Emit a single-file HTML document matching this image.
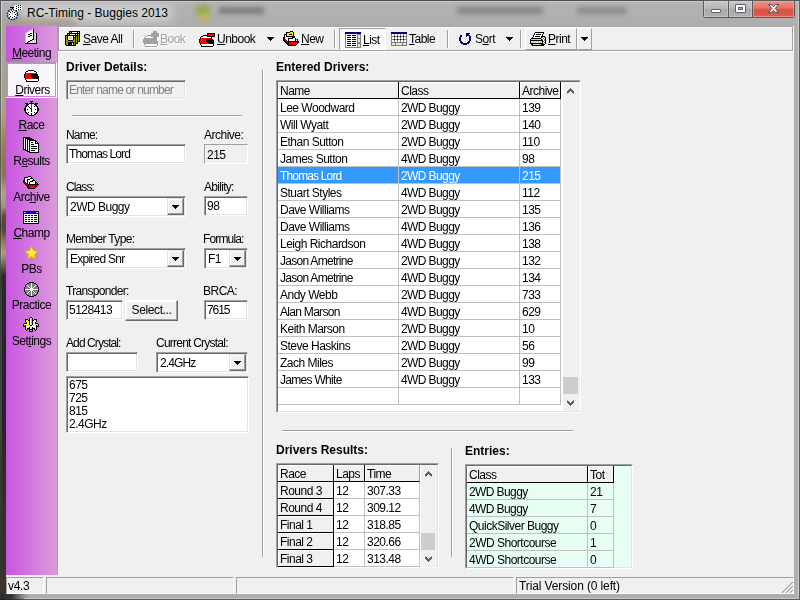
<!DOCTYPE html>
<html>
<head>
<meta charset="utf-8">
<title>RC-Timing - Buggies 2013</title>
<style>
*{box-sizing:border-box;margin:0;padding:0}
html,body{width:800px;height:600px;overflow:hidden}
body{position:relative;background:#b0b0b0;font-family:"Liberation Sans",sans-serif;font-size:12px;letter-spacing:-0.5px;color:#000;line-height:14px}
.a{position:absolute}
/* frame */
#frame{left:0;top:0;width:800px;height:600px;background:#b0b0b0}
#client{left:6px;top:26px;width:788px;height:568px;background:#f0f0f0}
/* sidebar */
u{text-decoration:underline;text-decoration-thickness:1px;text-underline-offset:1px}
/* 3D borders */
.inp{position:absolute;height:20px;background:#fff;border:1px solid;border-color:#a0a0a0 #fff #fff #a0a0a0;box-shadow:inset 1px 1px 0 #696969, inset -1px -1px 0 #e3e3e3;padding:2px 0 0 2px;white-space:nowrap;overflow:hidden}
.inp.dis{background:#f0f0f0}
.inp.cb{height:21px;padding:3px 0 0 3px}
.inp.st{box-shadow:none;padding:3px 0 0 2px}
.lbl{position:absolute;white-space:nowrap;height:14px}
.b{font-weight:bold;letter-spacing:0}
.ddb{position:absolute;right:1px;top:1px;width:17px;height:17px;background:#f0f0f0;border:1px solid;border-color:#e3e3e3 #696969 #696969 #e3e3e3;box-shadow:inset -1px -1px 0 #a0a0a0, inset 1px 1px 0 #fff}
.ddb:after{content:"";position:absolute;left:4px;top:6px;width:7px;height:4px;background:linear-gradient(#000,#000) 0 0/7px 1px no-repeat,linear-gradient(#000,#000) 1px 1px/5px 1px no-repeat,linear-gradient(#000,#000) 2px 2px/3px 1px no-repeat,linear-gradient(#000,#000) 3px 3px/1px 1px no-repeat}
.hsep{position:absolute;height:2px;border-top:1px solid #a0a0a0;border-bottom:1px solid #fff}
.vsep{position:absolute;width:2px;border-left:1px solid #a0a0a0;border-right:1px solid #fff}
/* grids */
.grid{position:absolute;border:1px solid;border-color:#a0a0a0 #fff #fff #a0a0a0;background:#fff;overflow:hidden}
.grid .in{position:absolute;left:0;top:0;right:0;bottom:0;border:1px solid;border-color:#696969 #e3e3e3 #e3e3e3 #696969}
.cell{position:absolute;height:17px;padding:2px 0 0 2px;white-space:nowrap;overflow:hidden;border-right:1px solid #c0c0c0;border-bottom:1px solid #c0c0c0;background:#fff}
.hd{background:#f0f0f0;border-right:1px solid #000;border-bottom:1px solid #000;box-shadow:inset 1px 1px 0 #fff}
.sel{background:#3399ff;color:#fff}
/* toolbar */
.tb{position:absolute;white-space:nowrap;height:14px}
.tsep{position:absolute;top:4px;width:2px;height:18px;border-left:1px solid #a0a0a0;border-right:1px solid #fff}
.dar{position:absolute;width:7px;height:4px;background:linear-gradient(#000,#000) 0 0/7px 1px no-repeat,linear-gradient(#000,#000) 1px 1px/5px 1px no-repeat,linear-gradient(#000,#000) 2px 2px/3px 1px no-repeat,linear-gradient(#000,#000) 3px 3px/1px 1px no-repeat}
/* status */
.sp{position:absolute;top:551px;height:17px;border:1px solid;border-color:#a0a0a0 #fff #fff #a0a0a0;padding:1px 0 0 2px;white-space:nowrap;letter-spacing:0}
</style>
</head>
<body>
<div id="frame" class="a">
 <!-- glass title bar -->
 <div class="a" style="left:0;top:0;width:800px;height:26px;background:linear-gradient(180deg,#b4b4b4 0%,#b0b0b0 60%,#adadad 100%)"></div>
 <!-- blurred things behind the glass -->
 <div class="a" style="left:22px;top:4px;width:150px;height:18px;background:#d2d2d2;filter:blur(5px);opacity:.9"></div>
 <div class="a" style="left:196px;top:5px;width:14px;height:12px;background:#8faa3a;filter:blur(3px);border-radius:6px"></div>
 <div class="a" style="left:200px;top:14px;width:10px;height:8px;background:#c9b860;filter:blur(3px);border-radius:5px"></div>
 <div class="a" style="left:219px;top:7px;width:45px;height:7px;background:#7c7c7c;filter:blur(2.5px)"></div>
 <div class="a" style="left:457px;top:7px;width:86px;height:7px;background:#858585;filter:blur(2.5px)"></div>
 <div class="a" style="left:577px;top:7px;width:50px;height:7px;background:#8c8c8c;filter:blur(2.5px)"></div>
 <div class="a" style="left:4px;top:19px;width:72px;height:9px;background:#9a8e74;filter:blur(4px);opacity:.75"></div>
 <!-- left strip -->
 <div class="a" style="left:0;top:20px;width:6px;height:580px;background:linear-gradient(180deg,#a8a89c 0px,#a4a290 80px,#a6a084 92px,#a89c68 102px,#98805a 122px,#8a7650 142px,#857860 157px,#a8a490 172px,#a09878 186px,#5c4c3a 196px,#54463a 211px,#8c7858 221px,#a8a080 233px,#6a6454 245px,#2a2a2c 256px,#242428 400px,#2e2a26 440px,#38302a 520px,#3a322c 580px)"></div>
 <div class="a" style="left:1px;top:270px;width:1px;height:325px;background:linear-gradient(180deg,rgba(70,70,72,0) 0,#444446 25px,#444446 150px,#3c3834 200px,#3a3430 100%)"></div>
 <!-- bottom strip -->
 <div class="a" style="left:0;top:594px;width:800px;height:6px;background:linear-gradient(90deg,#2c2927 0px,#3a3632 12px,#8a8885 22px,#adadad 30px,#aeaeae 100%)"></div>
 <!-- right strip -->
 <div class="a" style="left:794px;top:20px;width:6px;height:580px;background:#b0b0b0"></div>
 <!-- outer edges -->
 <div class="a" style="left:0;top:0;width:800px;height:1px;background:#4e4e4e"></div>
 <div class="a" style="left:1px;top:1px;width:798px;height:1px;background:#cfcfcf;opacity:.8"></div>
 <div class="a" style="left:0;top:0;width:1px;height:600px;background:linear-gradient(180deg,#5a5a5a 0,#6e6c62 110px,#5e5444 160px,#6a6658 200px,#3c342c 225px,#6a6450 255px,#3a3a3c 280px,#464648 420px,#3a3632 470px,#38322e 100%)"></div>
 <div class="a" style="left:1px;top:1px;width:1px;height:265px;background:linear-gradient(180deg,#d8d8d8 0,#c4c4b8 30px,#bcbcac 100px,#b8a878 125px,#a08a60 165px,#bcb8a4 195px,#6a5a48 225px,#b4ac8c 250px,rgba(60,60,56,0) 265px)"></div>
 <div class="a" style="left:799px;top:0;width:1px;height:600px;background:#5c5c5c"></div>
 <div class="a" style="left:798px;top:1px;width:1px;height:598px;background:#cdcdcd"></div>
 <div class="a" style="left:0;top:599px;width:800px;height:1px;background:linear-gradient(90deg,#1c1c1c 0,#333 15px,#5c5c5c 30px,#5c5c5c 100%)"></div>
 <div class="a" style="left:24px;top:598px;width:775px;height:1px;background:#c6c6c6"></div>
 <!-- inner edge around client -->
 <!-- title icon (stopwatch) -->
 <svg class="a" style="left:6px;top:4px" width="18" height="17" viewBox="0 0 18 17" shape-rendering="crispEdges">
  <rect x="4" y="2.5" width="5" height="1" fill="#000"/>
  <rect x="6" y="3" width="1" height="2" fill="#000"/>
  <circle cx="6.5" cy="10.5" r="5" fill="#fff" stroke="#00008b" stroke-width="1.6" stroke-dasharray="1.6 1" shape-rendering="auto"/>
  <g fill="#000"><rect x="6" y="7" width="1" height="1"/><rect x="6" y="13" width="1" height="1"/><rect x="3" y="10" width="1" height="1"/><rect x="9" y="10" width="1" height="1"/><rect x="4" y="8" width="1" height="1"/><rect x="8" y="8" width="1" height="1"/><rect x="4" y="12" width="1" height="1"/><rect x="8" y="12" width="1" height="1"/></g>
  <rect x="6" y="8" width="1" height="3" fill="#c8c8c8"/>
  <g fill="#fff"><rect x="9" y="1" width="7" height="5"/><rect x="8" y="2" width="2" height="4"/><rect x="10" y="6" width="2" height="1"/></g>
  <g fill="#000"><rect x="10" y="2" width="1" height="1"/><rect x="12" y="1" width="1" height="1"/><rect x="14" y="1" width="1" height="1"/><rect x="12" y="3" width="1" height="1"/><rect x="14" y="3" width="1" height="1"/><rect x="10" y="4" width="1" height="1"/><rect x="12" y="5" width="1" height="1"/><rect x="14" y="5" width="1" height="1"/><rect x="10" y="6" width="1" height="1"/></g>
 </svg>
 <div class="a" style="left:27px;top:5px;height:16px;font-size:12px;letter-spacing:0;white-space:nowrap;line-height:16px" id="ttl">RC-Timing - Buggies 2013</div>
 <!-- caption buttons -->
 <div class="a" style="left:703px;top:0;width:92px;height:18px;background:#5a5a5a;border-radius:0 0 3px 3px"></div>
 <div class="a" style="left:704px;top:1px;width:24px;height:16px;background:linear-gradient(180deg,#c6c6c6 0,#b9b9b9 45%,#a9a9a9 50%,#b0b0b0 100%);box-shadow:inset 0 0 0 1px rgba(255,255,255,.25)"></div>
 <div class="a" style="left:729px;top:1px;width:23px;height:16px;background:linear-gradient(180deg,#c6c6c6 0,#b9b9b9 45%,#a9a9a9 50%,#b0b0b0 100%);box-shadow:inset 0 0 0 1px rgba(255,255,255,.25)"></div>
 <div class="a" style="left:753px;top:1px;width:41px;height:16px;background:linear-gradient(180deg,#ee9186 0,#e57266 45%,#dc4e40 55%,#de5f51 100%);box-shadow:inset 0 0 0 1px rgba(255,190,180,.45)"></div>
 <div class="a" style="left:711px;top:9px;width:10px;height:4px;background:#fff;border:1px solid #5b6070;border-radius:1px"></div>
 <div class="a" style="left:735px;top:4px;width:11px;height:9px;background:#fff;border:1px solid #5b6070;border-radius:1px"></div>
 <div class="a" style="left:738px;top:7px;width:5px;height:3px;background:#a8a8a8;border:1px solid #5b6070"></div>
 <svg class="a" style="left:767px;top:3px" width="13" height="11" viewBox="0 0 13 11"><path d="M1.5 1.5 L4.3 1.5 L6.5 3.8 L8.7 1.5 L11.5 1.5 L8.2 5.5 L11.5 9.5 L8.7 9.5 L6.5 7.2 L4.3 9.5 L1.5 9.5 L4.8 5.5 Z" fill="#fff" stroke="#4a4f64" stroke-width="1" stroke-linejoin="round"/></svg>
</div>
<div id="client" class="a"></div>
<div id="ui" class="a" style="left:0;top:0;width:800px;height:600px;will-change:transform">
<div class="a" style="left:6px;top:26px;width:51px;height:549px;background:linear-gradient(90deg,#c856df 0%,#dc9bdc 100%)"></div>
<div class="a" style="left:57px;top:26px;width:1px;height:549px;background:#a0a0a0"></div>
<div class="a" style="left:58px;top:52px;width:1px;height:523px;background:#fff"></div>
<div class="a" style="left:6px;top:62px;width:51px;height:36px;border:1px solid;border-color:#a0a0a0 #fff #fff #a0a0a0;background:#fbf6fb"><div class="a" style="left:0;top:0;width:49px;height:34px;border:1px solid #d77fe3"></div></div>
<div class="a" style="left:25px;top:29px;line-height:0"><svg width="12" height="15" viewBox="0 0 12 15" shape-rendering="crispEdges"><path fill="#fff" d="M7 0h1v1h-1zM6 1h2v1h-2zM4 2h4v1h-4zM2 3h6v1h-6zM1 4h4v1h-4zM7 4h1v1h-1zM1 5h2v1h-2zM5 5h3v1h-3zM10 5h1v1h-1zM1 6h4v1h-4zM7 6h1v1h-1zM1 7h2v1h-2zM5 7h3v1h-3zM10 7h1v1h-1zM1 8h7v1h-7zM1 9h7v1h-7zM10 9h1v1h-1zM1 10h6v1h-6zM1 11h4v1h-4zM8 11h1v1h-1zM10 11h1v1h-1zM1 12h2v1h-2zM6 12h1v1h-1zM8 12h1v1h-1zM10 12h1v1h-1zM1 13h1v1h-1zM4 13h1v1h-1zM6 13h1v1h-1zM8 13h1v1h-1zM10 13h1v1h-1z"/><path fill="#000" d="M8 0h1v1h-1zM8 1h1v1h-1zM8 2h1v1h-1zM8 3h1v1h-1zM5 4h2v1h-2zM8 4h1v1h-1zM11 4h1v1h-1zM3 5h2v1h-2zM8 5h1v1h-1zM11 5h1v1h-1zM5 6h2v1h-2zM8 6h1v1h-1zM11 6h1v1h-1zM3 7h2v1h-2zM8 7h1v1h-1zM11 7h1v1h-1zM8 8h1v1h-1zM11 8h1v1h-1zM8 9h1v1h-1zM11 9h1v1h-1zM7 10h2v1h-2zM11 10h1v1h-1zM5 11h2v1h-2zM11 11h1v1h-1zM3 12h2v1h-2zM11 12h1v1h-1zM2 13h1v1h-1zM11 13h1v1h-1zM0 14h12v1h-12z"/><path fill="#c0c0c0" d="M5 1h1v1h-1zM3 2h1v1h-1zM1 3h1v1h-1zM0 4h1v1h-1zM9 4h2v1h-2zM0 5h1v1h-1zM9 5h1v1h-1zM0 6h1v1h-1zM9 6h2v1h-2zM0 7h1v1h-1zM9 7h1v1h-1zM0 8h1v1h-1zM9 8h2v1h-2zM0 9h1v1h-1zM9 9h1v1h-1zM0 10h1v1h-1zM9 10h2v1h-2zM0 11h1v1h-1zM7 11h1v1h-1zM9 11h1v1h-1zM0 12h1v1h-1zM5 12h1v1h-1zM7 12h1v1h-1zM9 12h1v1h-1zM0 13h1v1h-1zM3 13h1v1h-1zM5 13h1v1h-1zM7 13h1v1h-1zM9 13h1v1h-1z"/></svg></div>
<div class="lbl" style="left:6px;width:51px;text-align:center;top:46px"><u>M</u>eeting</div>
<div class="a" style="left:24px;top:70px;line-height:0"><svg width="15" height="12" viewBox="0 0 15 12" shape-rendering="crispEdges"><path fill="#000" d="M4 0h6v1h-6zM2 1h2v1h-2zM10 1h2v1h-2zM1 2h1v1h-1zM12 2h1v1h-1zM1 3h1v1h-1zM12 3h1v1h-1zM0 4h1v1h-1zM7 4h7v1h-7zM0 5h1v1h-1zM7 5h7v1h-7zM0 6h1v1h-1zM7 6h8v1h-8zM0 7h1v1h-1zM8 7h7v1h-7zM1 8h1v1h-1zM10 8h5v1h-5zM1 9h1v1h-1zM14 9h1v1h-1zM2 10h1v1h-1zM14 10h1v1h-1zM2 11h12v1h-12z"/><path fill="#fff" d="M4 1h6v1h-6zM2 2h10v1h-10zM2 9h12v1h-12zM3 10h11v1h-11z"/><path fill="#f00" d="M2 3h10v1h-10zM1 4h6v1h-6zM1 5h6v1h-6zM1 6h6v1h-6zM1 7h7v1h-7zM2 8h8v1h-8z"/></svg></div>
<div class="lbl" style="left:7px;width:51px;text-align:center;top:83px"><u>D</u>rivers</div>
<div class="a" style="left:24px;top:101px;line-height:0"><svg width="15" height="15" viewBox="0 0 15 15" shape-rendering="crispEdges"><path fill="#000" d="M6 0h3v1h-3zM7 1h1v1h-1zM1 2h3v1h-3zM5 2h5v1h-5zM11 2h3v1h-3zM2 3h3v1h-3zM10 3h3v1h-3zM2 4h2v1h-2zM11 4h2v1h-2zM1 5h2v1h-2zM4 5h1v1h-1zM10 5h1v1h-1zM12 5h2v1h-2zM1 6h1v1h-1zM5 6h1v1h-1zM13 6h1v1h-1zM0 7h2v1h-2zM6 7h1v1h-1zM13 7h2v1h-2zM0 8h2v1h-2zM3 8h1v1h-1zM7 8h1v1h-1zM11 8h1v1h-1zM13 8h2v1h-2zM0 9h2v1h-2zM7 9h1v1h-1zM13 9h2v1h-2zM1 10h1v1h-1zM7 10h1v1h-1zM13 10h1v1h-1zM1 11h2v1h-2zM4 11h1v1h-1zM10 11h1v1h-1zM12 11h2v1h-2zM2 12h2v1h-2zM7 12h1v1h-1zM11 12h2v1h-2zM3 13h2v1h-2zM7 13h1v1h-1zM10 13h2v1h-2zM5 14h5v1h-5z"/><path fill="#fff" d="M5 3h2v1h-2zM8 3h2v1h-2zM4 4h3v1h-3zM8 4h3v1h-3zM3 5h1v1h-1zM5 5h2v1h-2zM8 5h2v1h-2zM11 5h1v1h-1zM2 6h3v1h-3zM6 6h1v1h-1zM8 6h5v1h-5zM2 7h4v1h-4zM8 7h5v1h-5zM2 8h1v1h-1zM4 8h3v1h-3zM8 8h3v1h-3zM12 8h1v1h-1zM2 9h5v1h-5zM8 9h5v1h-5zM2 10h5v1h-5zM8 10h5v1h-5zM3 11h1v1h-1zM5 11h5v1h-5zM11 11h1v1h-1zM4 12h3v1h-3zM8 12h3v1h-3zM5 13h2v1h-2zM8 13h2v1h-2z"/><path fill="#f00" d="M7 3h1v1h-1zM7 4h1v1h-1zM7 5h1v1h-1zM7 6h1v1h-1zM7 7h1v1h-1z"/></svg></div>
<div class="lbl" style="left:6px;width:51px;text-align:center;top:118px"><u>R</u>ace</div>
<div class="a" style="left:23px;top:137px;line-height:0"><svg width="16" height="16" viewBox="0 0 16 16" shape-rendering="crispEdges"><path fill="#000" d="M0 0h7v1h-7zM0 1h1v1h-1zM2 1h7v1h-7zM0 2h1v1h-1zM2 2h1v1h-1zM4 2h7v1h-7zM0 3h1v1h-1zM2 3h1v1h-1zM4 3h1v1h-1zM6 3h7v1h-7zM0 4h1v1h-1zM2 4h1v1h-1zM4 4h1v1h-1zM6 4h1v1h-1zM12 4h2v1h-2zM0 5h1v1h-1zM2 5h1v1h-1zM4 5h1v1h-1zM6 5h1v1h-1zM8 5h2v1h-2zM12 5h1v1h-1zM14 5h1v1h-1zM0 6h1v1h-1zM2 6h1v1h-1zM4 6h1v1h-1zM6 6h1v1h-1zM12 6h4v1h-4zM0 7h1v1h-1zM2 7h1v1h-1zM4 7h1v1h-1zM6 7h1v1h-1zM8 7h3v1h-3zM15 7h1v1h-1zM0 8h1v1h-1zM2 8h1v1h-1zM4 8h1v1h-1zM6 8h1v1h-1zM15 8h1v1h-1zM0 9h1v1h-1zM2 9h1v1h-1zM4 9h1v1h-1zM6 9h1v1h-1zM8 9h6v1h-6zM15 9h1v1h-1zM0 10h1v1h-1zM2 10h1v1h-1zM4 10h1v1h-1zM6 10h1v1h-1zM15 10h1v1h-1zM0 11h1v1h-1zM2 11h1v1h-1zM4 11h1v1h-1zM6 11h1v1h-1zM8 11h6v1h-6zM15 11h1v1h-1zM0 12h3v1h-3zM4 12h1v1h-1zM6 12h1v1h-1zM15 12h1v1h-1zM2 13h3v1h-3zM6 13h1v1h-1zM8 13h4v1h-4zM15 13h1v1h-1zM4 14h3v1h-3zM15 14h1v1h-1zM6 15h10v1h-10z"/><path fill="#fff" d="M1 1h1v1h-1zM1 2h1v1h-1zM3 2h1v1h-1zM1 3h1v1h-1zM3 3h1v1h-1zM5 3h1v1h-1zM1 4h1v1h-1zM3 4h1v1h-1zM5 4h1v1h-1zM7 4h5v1h-5zM1 5h1v1h-1zM3 5h1v1h-1zM5 5h1v1h-1zM7 5h1v1h-1zM10 5h2v1h-2zM13 5h1v1h-1zM1 6h1v1h-1zM3 6h1v1h-1zM5 6h1v1h-1zM7 6h5v1h-5zM1 7h1v1h-1zM3 7h1v1h-1zM5 7h1v1h-1zM7 7h1v1h-1zM11 7h4v1h-4zM1 8h1v1h-1zM3 8h1v1h-1zM5 8h1v1h-1zM7 8h8v1h-8zM1 9h1v1h-1zM3 9h1v1h-1zM5 9h1v1h-1zM7 9h1v1h-1zM14 9h1v1h-1zM1 10h1v1h-1zM3 10h1v1h-1zM5 10h1v1h-1zM7 10h8v1h-8zM1 11h1v1h-1zM3 11h1v1h-1zM5 11h1v1h-1zM7 11h1v1h-1zM14 11h1v1h-1zM3 12h1v1h-1zM5 12h1v1h-1zM7 12h8v1h-8zM5 13h1v1h-1zM7 13h1v1h-1zM12 13h3v1h-3zM7 14h8v1h-8z"/></svg></div>
<div class="lbl" style="left:6px;width:51px;text-align:center;top:154px">R<u>e</u>sults</div>
<div class="a" style="left:23px;top:176px;line-height:0"><svg width="16" height="13" viewBox="0 0 16 13" shape-rendering="crispEdges"><path fill="#000" d="M5 0h3v1h-3zM1 1h4v1h-4zM8 1h1v1h-1zM1 2h1v1h-1zM7 2h3v1h-3zM1 3h1v1h-1zM4 3h3v1h-3zM10 3h1v1h-1zM0 4h2v1h-2zM4 4h1v1h-1zM9 4h3v1h-3zM0 5h2v1h-2zM4 5h1v1h-1zM7 5h3v1h-3zM12 5h1v1h-1zM0 6h1v1h-1zM4 6h1v1h-1zM6 6h1v1h-1zM12 6h2v1h-2zM1 7h1v1h-1zM4 7h1v1h-1zM6 7h1v1h-1zM12 7h1v1h-1zM14 7h1v1h-1zM2 8h1v1h-1zM5 8h11v1h-11zM3 9h1v1h-1zM5 9h1v1h-1zM14 9h1v1h-1zM4 10h2v1h-2zM13 10h1v1h-1zM4 11h2v1h-2zM12 11h1v1h-1zM5 12h7v1h-7z"/><path fill="#fff" d="M5 1h3v1h-3zM2 2h5v1h-5zM2 3h2v1h-2zM7 3h3v1h-3zM2 4h2v1h-2zM5 4h4v1h-4zM2 5h2v1h-2zM5 5h2v1h-2zM10 5h2v1h-2zM3 6h1v1h-1zM5 6h1v1h-1zM7 6h5v1h-5zM5 7h1v1h-1zM7 7h5v1h-5z"/><path fill="#b00000" d="M1 6h2v1h-2zM2 7h2v1h-2zM3 8h2v1h-2zM4 9h1v1h-1zM6 9h8v1h-8z"/><path fill="#808080" d="M13 7h1v1h-1z"/><path fill="#f00" d="M6 10h7v1h-7zM6 11h6v1h-6z"/></svg></div>
<div class="lbl" style="left:6px;width:51px;text-align:center;top:190px">Arc<u>h</u>ive</div>
<div class="a" style="left:23px;top:211px;line-height:0"><svg width="16" height="13" viewBox="0 0 16 13" shape-rendering="crispEdges"><path fill="#000" d="M0 0h16v1h-16zM0 1h1v1h-1zM15 1h1v1h-1zM0 2h1v1h-1zM15 2h1v1h-1zM0 3h1v1h-1zM15 3h1v1h-1zM0 4h1v1h-1zM2 4h2v1h-2zM5 4h2v1h-2zM8 4h2v1h-2zM11 4h3v1h-3zM15 4h1v1h-1zM0 5h1v1h-1zM15 5h1v1h-1zM0 6h1v1h-1zM2 6h2v1h-2zM5 6h2v1h-2zM8 6h2v1h-2zM11 6h3v1h-3zM15 6h1v1h-1zM0 7h1v1h-1zM15 7h1v1h-1zM0 8h1v1h-1zM2 8h2v1h-2zM5 8h2v1h-2zM8 8h2v1h-2zM11 8h3v1h-3zM15 8h1v1h-1zM0 9h1v1h-1zM15 9h1v1h-1zM0 10h1v1h-1zM2 10h2v1h-2zM5 10h2v1h-2zM8 10h2v1h-2zM11 10h3v1h-3zM15 10h1v1h-1zM0 11h1v1h-1zM15 11h1v1h-1zM0 12h16v1h-16z"/><path fill="#c0c0c0" d="M1 1h2v1h-2zM13 1h2v1h-2z"/><path fill="#0000f0" d="M3 1h10v1h-10zM1 2h14v1h-14z"/><path fill="#fff" d="M1 3h14v1h-14zM1 4h1v1h-1zM4 4h1v1h-1zM7 4h1v1h-1zM10 4h1v1h-1zM14 4h1v1h-1zM1 5h14v1h-14zM1 6h1v1h-1zM4 6h1v1h-1zM7 6h1v1h-1zM10 6h1v1h-1zM14 6h1v1h-1zM1 7h14v1h-14zM1 8h1v1h-1zM4 8h1v1h-1zM7 8h1v1h-1zM10 8h1v1h-1zM14 8h1v1h-1zM1 9h14v1h-14zM1 10h1v1h-1zM4 10h1v1h-1zM7 10h1v1h-1zM10 10h1v1h-1zM14 10h1v1h-1zM1 11h14v1h-14z"/></svg></div>
<div class="lbl" style="left:6px;width:51px;text-align:center;top:226px"><u>C</u>hamp</div>
<div class="a" style="left:23px;top:245px;width:16px;height:16px;line-height:0"><svg width="17" height="16" viewBox="0 0 17 16"><defs><linearGradient id="sg" x1="0" y1="0" x2="0" y2="1"><stop offset="0" stop-color="#fffa9a"/><stop offset=".45" stop-color="#fff22e"/><stop offset="1" stop-color="#f0d414"/></linearGradient></defs><path d="M8.50 1.10 L10.44 5.73 L15.44 6.14 L11.64 9.42 L12.79 14.31 L8.50 11.70 L4.21 14.31 L5.36 9.42 L1.56 6.14 L6.56 5.73Z" fill="url(#sg)" stroke="#d0a626" stroke-width=".9" stroke-linejoin="round"/></svg></div>
<div class="lbl" style="left:6px;width:51px;text-align:center;top:262px">PBs</div>
<div class="a" style="left:24px;top:282px;line-height:0"><svg width="15" height="15" viewBox="0 0 15 15" shape-rendering="crispEdges"><path fill="#000" d="M5 0h5v1h-5zM3 1h2v1h-2zM10 1h2v1h-2zM2 2h1v1h-1zM12 2h1v1h-1zM1 3h1v1h-1zM13 3h1v1h-1zM1 4h1v1h-1zM13 4h1v1h-1zM0 5h1v1h-1zM14 5h1v1h-1zM0 6h1v1h-1zM14 6h1v1h-1zM0 7h1v1h-1zM14 7h1v1h-1zM0 8h1v1h-1zM14 8h1v1h-1zM0 9h1v1h-1zM14 9h1v1h-1zM1 10h1v1h-1zM13 10h1v1h-1zM1 11h1v1h-1zM13 11h1v1h-1zM2 12h1v1h-1zM12 12h1v1h-1zM3 13h2v1h-2zM10 13h2v1h-2zM5 14h5v1h-5z"/><path fill="#808080" d="M5 1h2v1h-2zM8 1h2v1h-2zM3 2h4v1h-4zM8 2h4v1h-4zM2 3h1v1h-1zM4 3h3v1h-3zM8 3h3v1h-3zM12 3h1v1h-1zM2 4h2v1h-2zM5 4h2v1h-2zM8 4h2v1h-2zM11 4h2v1h-2zM1 5h4v1h-4zM6 5h1v1h-1zM8 5h1v1h-1zM10 5h4v1h-4zM1 6h5v1h-5zM9 6h5v1h-5zM1 8h5v1h-5zM9 8h5v1h-5zM1 9h4v1h-4zM6 9h1v1h-1zM8 9h1v1h-1zM10 9h4v1h-4zM2 10h2v1h-2zM5 10h2v1h-2zM8 10h2v1h-2zM11 10h2v1h-2zM2 11h1v1h-1zM4 11h3v1h-3zM8 11h3v1h-3zM12 11h1v1h-1zM3 12h4v1h-4zM8 12h4v1h-4zM5 13h2v1h-2zM8 13h2v1h-2z"/><path fill="#fff" d="M7 1h1v1h-1zM7 2h1v1h-1zM3 3h1v1h-1zM7 3h1v1h-1zM11 3h1v1h-1zM4 4h1v1h-1zM7 4h1v1h-1zM10 4h1v1h-1zM5 5h1v1h-1zM7 5h1v1h-1zM9 5h1v1h-1zM6 6h3v1h-3zM1 7h13v1h-13zM6 8h3v1h-3zM5 9h1v1h-1zM7 9h1v1h-1zM9 9h1v1h-1zM4 10h1v1h-1zM7 10h1v1h-1zM10 10h1v1h-1zM3 11h1v1h-1zM7 11h1v1h-1zM11 11h1v1h-1zM7 12h1v1h-1zM7 13h1v1h-1z"/></svg></div>
<div class="lbl" style="left:6px;width:51px;text-align:center;top:298px">Practice</div>
<div class="a" style="left:23px;top:317px;line-height:0"><svg width="16" height="15" viewBox="0 0 16 15" shape-rendering="crispEdges"><path fill="#000" d="M7 0h2v1h-2zM6 1h1v1h-1zM9 1h1v1h-1zM2 2h3v1h-3zM6 2h1v1h-1zM9 2h1v1h-1zM11 2h3v1h-3zM2 3h1v1h-1zM5 3h2v1h-2zM9 3h2v1h-2zM13 3h1v1h-1zM2 4h1v1h-1zM6 4h1v1h-1zM9 4h1v1h-1zM13 4h1v1h-1zM3 5h1v1h-1zM6 5h1v1h-1zM9 5h1v1h-1zM12 5h1v1h-1zM1 6h3v1h-3zM6 6h1v1h-1zM9 6h1v1h-1zM12 6h3v1h-3zM0 7h1v1h-1zM6 7h1v1h-1zM9 7h1v1h-1zM15 7h1v1h-1zM0 8h1v1h-1zM2 8h1v1h-1zM7 8h2v1h-2zM13 8h1v1h-1zM15 8h1v1h-1zM0 9h3v1h-3zM13 9h3v1h-3zM2 10h1v1h-1zM6 10h1v1h-1zM9 10h1v1h-1zM13 10h1v1h-1zM2 11h1v1h-1zM4 11h3v1h-3zM9 11h3v1h-3zM13 11h1v1h-1zM2 12h1v1h-1zM4 12h1v1h-1zM6 12h4v1h-4zM11 12h1v1h-1zM13 12h1v1h-1zM3 13h1v1h-1zM6 13h1v1h-1zM9 13h1v1h-1zM12 13h1v1h-1zM6 14h4v1h-4z"/><path fill="#fff" d="M7 1h1v1h-1zM7 2h1v1h-1zM4 3h1v1h-1zM7 3h1v1h-1zM11 3h1v1h-1zM3 4h1v1h-1zM5 4h1v1h-1zM7 4h1v1h-1zM10 4h1v1h-1zM12 4h1v1h-1zM4 5h1v1h-1zM7 5h1v1h-1zM11 5h1v1h-1zM5 6h1v1h-1zM7 6h1v1h-1zM10 6h1v1h-1zM2 7h1v1h-1zM4 7h1v1h-1zM7 7h1v1h-1zM11 7h1v1h-1zM13 7h1v1h-1zM4 8h1v1h-1zM6 8h1v1h-1zM9 8h1v1h-1zM11 8h1v1h-1zM3 9h1v1h-1zM5 9h1v1h-1zM7 9h1v1h-1zM9 9h1v1h-1zM11 9h1v1h-1zM4 10h1v1h-1zM8 10h1v1h-1zM11 10h1v1h-1zM3 11h1v1h-1zM7 11h1v1h-1zM12 11h1v1h-1z"/><path fill="#b8b8b8" d="M8 1h1v1h-1zM8 2h1v1h-1zM8 3h1v1h-1zM8 4h1v1h-1zM8 5h1v1h-1zM8 6h1v1h-1zM8 7h1v1h-1zM7 13h2v1h-2z"/><path fill="#f4f000" d="M3 3h1v1h-1zM12 3h1v1h-1zM4 4h1v1h-1zM11 4h1v1h-1zM5 5h1v1h-1zM10 5h1v1h-1zM4 6h1v1h-1zM11 6h1v1h-1zM1 7h1v1h-1zM3 7h1v1h-1zM5 7h1v1h-1zM10 7h1v1h-1zM12 7h1v1h-1zM14 7h1v1h-1zM3 8h1v1h-1zM5 8h1v1h-1zM10 8h1v1h-1zM12 8h1v1h-1zM4 9h1v1h-1zM6 9h1v1h-1zM8 9h1v1h-1zM10 9h1v1h-1zM12 9h1v1h-1zM3 10h1v1h-1zM5 10h1v1h-1zM7 10h1v1h-1zM10 10h1v1h-1zM12 10h1v1h-1zM8 11h1v1h-1z"/><path fill="#808080" d="M1 8h1v1h-1zM3 12h1v1h-1zM12 12h1v1h-1z"/><path fill="#a0a000" d="M14 8h1v1h-1z"/></svg></div>
<div class="lbl" style="left:6px;width:51px;text-align:center;top:334px">Set<u>t</u>ings</div>
<div class="a" style="left:58px;top:26px;width:735px;height:1px;background:#a6a6a6"></div>
<div class="a" style="left:58px;top:26px;width:1px;height:25px;background:#a0a0a0"></div>
<div class="a" style="left:58px;top:50px;width:735px;height:1px;background:#a0a0a0"></div>
<div class="a" style="left:792px;top:27px;width:1px;height:24px;background:#a0a0a0"></div>
<div class="a" style="left:59px;top:27px;width:733px;height:1px;background:#fff"></div>
<div class="a" style="left:59px;top:27px;width:1px;height:23px;background:#fff"></div>
<div class="a" style="left:793px;top:26px;width:1px;height:26px;background:#fff"></div>
<div class="a" style="left:58px;top:51px;width:736px;height:1px;background:#fff"></div>
<div class="a" style="left:339px;top:28px;width:47px;height:22px;border:1px solid;border-color:#a0a0a0 #fff #fff #a0a0a0;background:#f9f9f9"></div>
<div class="a" style="left:525px;top:28px;width:52px;height:22px;border:1px solid;border-color:#fff #a0a0a0 #a0a0a0 #fff"></div>
<div class="a" style="left:577px;top:28px;width:15px;height:22px;border:1px solid;border-color:#fff #a0a0a0 #a0a0a0 #fff"></div>
<div class="a" style="left:65px;top:31px;line-height:0"><svg width="15" height="15" viewBox="0 0 15 15" shape-rendering="crispEdges"><path fill="#000" d="M4 0h11v1h-11zM4 1h1v1h-1zM6 1h1v1h-1zM12 1h1v1h-1zM14 1h1v1h-1zM2 2h13v1h-13zM2 3h1v1h-1zM4 3h1v1h-1zM10 3h1v1h-1zM12 3h1v1h-1zM14 3h1v1h-1zM0 4h13v1h-13zM14 4h1v1h-1zM0 5h1v1h-1zM2 5h1v1h-1zM8 5h1v1h-1zM10 5h1v1h-1zM12 5h1v1h-1zM14 5h1v1h-1zM0 6h1v1h-1zM2 6h1v1h-1zM8 6h3v1h-3zM12 6h1v1h-1zM14 6h1v1h-1zM0 7h1v1h-1zM2 7h1v1h-1zM8 7h1v1h-1zM10 7h1v1h-1zM12 7h1v1h-1zM14 7h1v1h-1zM0 8h1v1h-1zM2 8h1v1h-1zM8 8h1v1h-1zM10 8h1v1h-1zM12 8h1v1h-1zM14 8h1v1h-1zM0 9h1v1h-1zM3 9h5v1h-5zM10 9h1v1h-1zM12 9h1v1h-1zM14 9h1v1h-1zM0 10h1v1h-1zM10 10h1v1h-1zM12 10h3v1h-3zM0 11h1v1h-1zM3 11h6v1h-6zM10 11h1v1h-1zM12 11h1v1h-1zM0 12h1v1h-1zM3 12h4v1h-4zM8 12h1v1h-1zM10 12h3v1h-3zM0 13h1v1h-1zM3 13h4v1h-4zM8 13h1v1h-1zM10 13h1v1h-1zM1 14h10v1h-10z"/><path fill="#96960a" d="M5 1h1v1h-1zM3 3h1v1h-1zM13 3h1v1h-1zM13 4h1v1h-1zM1 5h1v1h-1zM11 5h1v1h-1zM13 5h1v1h-1zM1 6h1v1h-1zM11 6h1v1h-1zM13 6h1v1h-1zM1 7h1v1h-1zM9 7h1v1h-1zM11 7h1v1h-1zM13 7h1v1h-1zM1 8h1v1h-1zM9 8h1v1h-1zM11 8h1v1h-1zM13 8h1v1h-1zM1 9h2v1h-2zM8 9h2v1h-2zM11 9h1v1h-1zM13 9h1v1h-1zM1 10h9v1h-9zM11 10h1v1h-1zM1 11h2v1h-2zM9 11h1v1h-1zM11 11h1v1h-1zM1 12h2v1h-2zM9 12h1v1h-1zM1 13h2v1h-2zM9 13h1v1h-1z"/><path fill="#fff" d="M7 1h5v1h-5zM13 1h1v1h-1zM5 3h5v1h-5zM11 3h1v1h-1zM3 5h5v1h-5zM9 5h1v1h-1zM3 6h1v1h-1zM7 6h1v1h-1zM3 7h1v1h-1zM7 7h1v1h-1zM3 8h5v1h-5zM7 12h1v1h-1zM7 13h1v1h-1z"/><path fill="#d0d0d0" d="M4 6h3v1h-3zM4 7h3v1h-3z"/></svg></div>
<div class="lbl tb" style="left:83px;top:32px;"><u>S</u>ave All</div>
<div class="tsep" style="left:133px;top:30px"></div>
<div class="a" style="left:144px;top:32px;line-height:0;filter:brightness(10)"><svg width="16" height="16" viewBox="0 0 16 16" shape-rendering="crispEdges"><path fill="#a0a0a0" d="M10 0h4v1h-4zM10 1h4v1h-4zM8 2h8v1h-8zM8 3h8v1h-8zM4 4h12v1h-12zM2 5h2v1h-2zM8 5h8v1h-8zM1 6h1v1h-1zM10 6h4v1h-4zM1 7h13v1h-13zM0 8h14v1h-14zM0 9h14v1h-14zM0 10h15v1h-15zM0 11h15v1h-15zM1 12h14v1h-14zM1 13h1v1h-1zM14 13h1v1h-1zM2 14h1v1h-1zM14 14h1v1h-1zM2 15h12v1h-12z"/><path fill="#fff" d="M4 5h4v1h-4zM2 6h8v1h-8zM2 13h12v1h-12zM3 14h11v1h-11z"/></svg></div>
<div class="a" style="left:143px;top:31px;line-height:0"><svg width="16" height="16" viewBox="0 0 16 16" shape-rendering="crispEdges"><path fill="#a0a0a0" d="M10 0h4v1h-4zM10 1h4v1h-4zM8 2h8v1h-8zM8 3h8v1h-8zM4 4h12v1h-12zM2 5h2v1h-2zM8 5h8v1h-8zM1 6h1v1h-1zM10 6h4v1h-4zM1 7h13v1h-13zM0 8h14v1h-14zM0 9h14v1h-14zM0 10h15v1h-15zM0 11h15v1h-15zM1 12h14v1h-14zM1 13h1v1h-1zM14 13h1v1h-1zM2 14h1v1h-1zM14 14h1v1h-1zM2 15h12v1h-12z"/><path fill="#fff" d="M4 5h4v1h-4zM2 6h8v1h-8zM2 13h12v1h-12zM3 14h11v1h-11z"/></svg></div>
<div class="lbl tb" style="left:161px;top:33px;color:#fff"><u>B</u>ook</div>
<div class="lbl tb" style="left:160px;top:32px;color:#a0a0a0"><u>B</u>ook</div>
<div class="a" style="left:199px;top:31px;line-height:0"><svg width="16" height="16" viewBox="0 0 16 16" shape-rendering="crispEdges"><path fill="#000" d="M8 2h8v1h-8zM8 3h1v1h-1zM15 3h1v1h-1zM4 4h5v1h-5zM15 4h1v1h-1zM2 5h2v1h-2zM8 5h8v1h-8zM1 6h1v1h-1zM12 6h1v1h-1zM1 7h1v1h-1zM12 7h1v1h-1zM0 8h1v1h-1zM7 8h7v1h-7zM0 9h1v1h-1zM7 9h8v1h-8zM0 10h1v1h-1zM7 10h8v1h-8zM0 11h1v1h-1zM8 11h7v1h-7zM1 12h1v1h-1zM10 12h5v1h-5zM1 13h1v1h-1zM14 13h1v1h-1zM2 14h1v1h-1zM14 14h1v1h-1zM2 15h12v1h-12z"/><path fill="#f00" d="M9 3h6v1h-6zM9 4h6v1h-6zM2 7h10v1h-10zM1 8h6v1h-6zM1 9h6v1h-6zM1 10h6v1h-6zM1 11h7v1h-7zM2 12h8v1h-8z"/><path fill="#fff" d="M4 5h4v1h-4zM2 6h10v1h-10zM2 13h12v1h-12zM3 14h11v1h-11z"/></svg></div>
<div class="lbl tb" style="left:217px;top:32px;"><u>U</u>nbook</div>
<div class="dar" style="left:267px;top:37px"></div>
<div class="a" style="left:283px;top:31px;line-height:0"><svg width="16" height="15" viewBox="0 0 16 15" shape-rendering="crispEdges"><path fill="#000" d="M7 0h3v1h-3zM3 1h4v1h-4zM10 1h1v1h-1zM3 2h1v1h-1zM10 2h1v1h-1zM1 3h3v1h-3zM6 3h3v1h-3zM10 3h1v1h-1zM1 4h1v1h-1zM3 4h1v1h-1zM10 4h1v1h-1zM1 5h1v1h-1zM3 5h9v1h-9zM0 6h2v1h-2zM9 6h3v1h-3zM0 7h2v1h-2zM5 7h5v1h-5zM12 7h1v1h-1zM0 8h1v1h-1zM5 8h1v1h-1zM12 8h1v1h-1zM14 8h1v1h-1zM0 9h2v1h-2zM5 9h1v1h-1zM12 9h1v1h-1zM14 9h1v1h-1zM1 10h2v1h-2zM5 10h11v1h-11zM2 11h2v1h-2zM5 11h1v1h-1zM14 11h2v1h-2zM3 12h3v1h-3zM14 12h1v1h-1zM4 13h2v1h-2zM13 13h1v1h-1zM5 14h8v1h-8z"/><path fill="#f4f000" d="M7 1h3v1h-3zM4 2h6v1h-6zM4 3h2v1h-2zM9 3h1v1h-1zM4 4h6v1h-6z"/><path fill="#fff" d="M2 4h1v1h-1zM2 5h1v1h-1zM2 6h2v1h-2zM2 7h3v1h-3zM10 7h2v1h-2zM3 8h2v1h-2zM6 8h6v1h-6zM4 9h1v1h-1zM6 9h6v1h-6zM13 9h1v1h-1z"/><path fill="#d0d0d0" d="M4 6h5v1h-5z"/><path fill="#b00000" d="M1 8h2v1h-2zM2 9h2v1h-2zM3 10h2v1h-2zM4 11h1v1h-1z"/><path fill="#808080" d="M13 8h1v1h-1z"/><path fill="#f00" d="M6 11h8v1h-8zM6 12h8v1h-8zM6 13h7v1h-7z"/></svg></div>
<div class="lbl tb" style="left:301px;top:32px;"><u>N</u>ew</div>
<div class="tsep" style="left:334px;top:30px"></div>
<div class="a" style="left:345px;top:32px;line-height:0"><svg width="16" height="16" viewBox="0 0 16 16" shape-rendering="crispEdges"><path fill="#000080" d="M0 0h16v1h-16zM0 1h16v1h-16z"/><path fill="#808080" d="M0 2h1v1h-1zM12 2h4v1h-4zM0 3h1v1h-1zM12 3h1v1h-1zM15 3h1v1h-1zM0 4h1v1h-1zM12 4h1v1h-1zM15 4h1v1h-1zM0 5h1v1h-1zM12 5h1v1h-1zM15 5h1v1h-1zM0 6h1v1h-1zM12 6h4v1h-4zM0 7h1v1h-1zM12 7h1v1h-1zM15 7h1v1h-1zM0 8h1v1h-1zM12 8h1v1h-1zM15 8h1v1h-1zM0 9h1v1h-1zM12 9h1v1h-1zM15 9h1v1h-1zM0 10h1v1h-1zM12 10h4v1h-4zM0 11h1v1h-1zM12 11h4v1h-4zM0 12h1v1h-1zM12 12h1v1h-1zM15 12h1v1h-1zM0 13h1v1h-1zM12 13h1v1h-1zM15 13h1v1h-1zM0 14h1v1h-1zM12 14h1v1h-1zM15 14h1v1h-1zM0 15h16v1h-16z"/><path fill="#fff" d="M1 2h11v1h-11zM1 3h1v1h-1zM6 3h1v1h-1zM11 3h1v1h-1zM1 4h11v1h-11zM1 5h1v1h-1zM6 5h1v1h-1zM11 5h1v1h-1zM1 6h11v1h-11zM1 7h1v1h-1zM6 7h1v1h-1zM11 7h1v1h-1zM1 8h11v1h-11zM1 9h1v1h-1zM6 9h1v1h-1zM11 9h1v1h-1zM1 10h11v1h-11zM1 11h1v1h-1zM6 11h1v1h-1zM11 11h1v1h-1zM1 12h11v1h-11zM1 13h1v1h-1zM6 13h1v1h-1zM11 13h1v1h-1zM1 14h11v1h-11z"/><path fill="#000" d="M2 3h4v1h-4zM7 3h4v1h-4zM2 5h4v1h-4zM7 5h4v1h-4zM2 7h4v1h-4zM7 7h4v1h-4zM2 9h4v1h-4zM7 9h4v1h-4zM2 11h4v1h-4zM7 11h4v1h-4zM2 13h4v1h-4zM7 13h4v1h-4z"/><path fill="#e6e6d0" d="M13 3h2v1h-2zM13 4h2v1h-2zM13 5h2v1h-2zM13 7h2v1h-2zM13 8h2v1h-2zM13 9h2v1h-2zM13 12h2v1h-2zM13 13h2v1h-2zM13 14h2v1h-2z"/></svg></div>
<div class="lbl tb" style="left:363px;top:33px;"><u>L</u>ist</div>
<div class="a" style="left:391px;top:32px;line-height:0"><svg width="16" height="14" viewBox="0 0 16 14" shape-rendering="crispEdges"><path fill="#000080" d="M0 0h16v1h-16zM0 1h16v1h-16z"/><path fill="#808080" d="M0 2h1v1h-1zM3 2h1v1h-1zM6 2h1v1h-1zM9 2h1v1h-1zM12 2h1v1h-1zM15 2h1v1h-1zM0 3h1v1h-1zM3 3h1v1h-1zM6 3h1v1h-1zM9 3h1v1h-1zM12 3h1v1h-1zM15 3h1v1h-1zM0 4h3v1h-3zM4 4h2v1h-2zM7 4h2v1h-2zM10 4h2v1h-2zM13 4h3v1h-3zM0 5h1v1h-1zM3 5h1v1h-1zM6 5h1v1h-1zM9 5h1v1h-1zM12 5h1v1h-1zM15 5h1v1h-1zM0 6h1v1h-1zM3 6h1v1h-1zM6 6h1v1h-1zM9 6h1v1h-1zM12 6h1v1h-1zM15 6h1v1h-1zM0 7h3v1h-3zM4 7h2v1h-2zM7 7h2v1h-2zM10 7h2v1h-2zM13 7h3v1h-3zM0 8h1v1h-1zM3 8h1v1h-1zM6 8h1v1h-1zM9 8h1v1h-1zM12 8h1v1h-1zM15 8h1v1h-1zM0 9h1v1h-1zM3 9h1v1h-1zM6 9h1v1h-1zM9 9h1v1h-1zM12 9h1v1h-1zM15 9h1v1h-1zM0 10h16v1h-16zM0 11h1v1h-1zM4 11h1v1h-1zM11 11h1v1h-1zM15 11h1v1h-1zM0 12h1v1h-1zM4 12h1v1h-1zM11 12h1v1h-1zM15 12h1v1h-1zM0 13h16v1h-16z"/><path fill="#fff" d="M1 2h2v1h-2zM4 2h2v1h-2zM7 2h2v1h-2zM10 2h2v1h-2zM13 2h2v1h-2zM1 3h2v1h-2zM4 3h2v1h-2zM7 3h2v1h-2zM10 3h2v1h-2zM13 3h2v1h-2zM1 5h2v1h-2zM4 5h2v1h-2zM7 5h2v1h-2zM10 5h2v1h-2zM13 5h2v1h-2zM1 6h2v1h-2zM4 6h2v1h-2zM7 6h2v1h-2zM10 6h2v1h-2zM13 6h2v1h-2zM1 8h2v1h-2zM4 8h2v1h-2zM7 8h2v1h-2zM10 8h2v1h-2zM13 8h2v1h-2zM1 9h2v1h-2zM4 9h2v1h-2zM7 9h2v1h-2zM10 9h2v1h-2zM13 9h2v1h-2z"/><path fill="#000" d="M3 4h1v1h-1zM6 4h1v1h-1zM9 4h1v1h-1zM12 4h1v1h-1zM3 7h1v1h-1zM6 7h1v1h-1zM9 7h1v1h-1zM12 7h1v1h-1z"/><path fill="#e6e6d0" d="M1 11h3v1h-3zM5 11h6v1h-6zM12 11h3v1h-3zM1 12h3v1h-3zM5 12h6v1h-6zM12 12h3v1h-3z"/></svg></div>
<div class="lbl tb" style="left:409px;top:32px;"><u>T</u>able</div>
<div class="tsep" style="left:447px;top:30px"></div>
<div class="a" style="left:459px;top:33px;line-height:0"><svg width="12" height="12" viewBox="0 0 12 12" shape-rendering="crispEdges"><path fill="#000080" d="M7 0h4v1h-4zM7 1h3v1h-3zM1 2h2v1h-2zM7 2h4v1h-4zM1 3h2v1h-2zM7 3h1v1h-1zM10 3h2v1h-2zM0 4h2v1h-2zM10 4h2v1h-2zM0 5h2v1h-2zM10 5h2v1h-2zM0 6h2v1h-2zM10 6h2v1h-2zM0 7h2v1h-2zM10 7h2v1h-2zM1 8h2v1h-2zM9 8h2v1h-2zM1 9h3v1h-3zM8 9h3v1h-3zM2 10h8v1h-8zM4 11h4v1h-4z"/></svg></div>
<div class="lbl tb" style="left:475px;top:32px;">S<u>o</u>rt</div>
<div class="dar" style="left:506px;top:37px"></div>
<div class="tsep" style="left:520px;top:30px"></div>
<div class="a" style="left:530px;top:32px;line-height:0"><svg width="16" height="14" viewBox="0 0 16 14" shape-rendering="crispEdges"><path fill="#000" d="M5 0h9v1h-9zM4 1h1v1h-1zM13 1h1v1h-1zM4 2h1v1h-1zM6 2h5v1h-5zM12 2h1v1h-1zM3 3h1v1h-1zM12 3h1v1h-1zM3 4h1v1h-1zM5 4h5v1h-5zM11 4h4v1h-4zM2 5h1v1h-1zM11 5h1v1h-1zM15 5h1v1h-1zM1 6h10v1h-10zM15 6h1v1h-1zM0 7h1v1h-1zM11 7h1v1h-1zM15 7h1v1h-1zM0 8h13v1h-13zM15 8h1v1h-1zM0 9h1v1h-1zM12 9h1v1h-1zM15 9h1v1h-1zM0 10h1v1h-1zM12 10h1v1h-1zM15 10h1v1h-1zM0 11h13v1h-13zM15 11h1v1h-1zM1 12h2v1h-2zM11 12h4v1h-4zM2 13h12v1h-12z"/><path fill="#fff" d="M5 1h8v1h-8zM5 2h1v1h-1zM11 2h1v1h-1zM4 3h8v1h-8zM4 4h1v1h-1zM10 4h1v1h-1zM3 5h8v1h-8zM13 5h1v1h-1zM12 6h1v1h-1zM14 6h1v1h-1zM13 7h1v1h-1zM13 8h1v1h-1zM14 9h1v1h-1zM13 10h1v1h-1zM14 11h1v1h-1z"/><path fill="#808080" d="M12 5h1v1h-1zM14 5h1v1h-1zM11 6h1v1h-1zM13 6h1v1h-1zM12 7h1v1h-1zM14 7h1v1h-1zM14 8h1v1h-1zM13 9h1v1h-1zM14 10h1v1h-1zM13 11h1v1h-1z"/><path fill="#d0d0d0" d="M1 7h10v1h-10zM1 9h6v1h-6zM10 9h2v1h-2zM1 10h6v1h-6zM10 10h2v1h-2zM3 12h8v1h-8z"/><path fill="#f4f000" d="M7 9h3v1h-3zM7 10h3v1h-3z"/></svg></div>
<div class="lbl tb" style="left:548px;top:32px;"><u>P</u>rint</div>
<div class="dar" style="left:581px;top:37px"></div>
<div class="lbl b" style="left:66px;top:60px;">Driver Details:</div>
<div class="inp dis" style="left:66px;top:80px;width:120px;color:#808080;letter-spacing:-0.8px">Enter name or number</div>
<div class="hsep" style="left:72px;top:115px;width:170px"></div>
<div class="lbl " style="left:66px;top:128px;letter-spacing:-0.8px">Name:</div>
<div class="lbl " style="left:204px;top:128px;">Archive:</div>
<div class="inp " style="left:66px;top:144px;width:120px;letter-spacing:-0.88px">Thomas Lord</div>
<div class="inp dis st" style="left:204px;top:144px;width:44px;">215</div>
<div class="lbl " style="left:66px;top:180px;letter-spacing:-0.9px">Class:</div>
<div class="lbl " style="left:204px;top:180px;letter-spacing:-0.7px">Ability:</div>
<div class="inp cb" style="left:66px;top:196px;width:120px;">2WD Buggy<div class="ddb"></div></div>
<div class="inp " style="left:204px;top:196px;width:44px;">98</div>
<div class="lbl " style="left:66px;top:232px;letter-spacing:-0.68px">Member Type:</div>
<div class="lbl " style="left:203px;top:232px;letter-spacing:-0.85px">Formula:</div>
<div class="inp cb" style="left:66px;top:248px;width:120px;letter-spacing:-0.75px">Expired Snr<div class="ddb"></div></div>
<div class="inp cb" style="left:204px;top:248px;width:44px;">F1<div class="ddb"></div></div>
<div class="lbl " style="left:66px;top:284px;letter-spacing:-0.68px">Transponder:</div>
<div class="lbl " style="left:203px;top:284px;">BRCA:</div>
<div class="inp " style="left:66px;top:300px;width:57px;">5128413</div>
<div class="inp " style="left:204px;top:300px;width:44px;letter-spacing:-1.1px">7615</div>
<div class="a" style="left:125px;top:300px;width:53px;height:21px;background:#f0f0f0;border:1px solid;border-color:#fff #696969 #696969 #fff;box-shadow:inset -1px -1px 0 #a0a0a0, inset 1px 1px 0 #fff;text-align:center;padding-top:2px;letter-spacing:-0.4px">Select...</div>
<div class="lbl " style="left:66px;top:336px;letter-spacing:-0.9px">Add Crystal:</div>
<div class="lbl " style="left:156px;top:336px;letter-spacing:-0.77px">Current Crystal:</div>
<div class="inp " style="left:66px;top:352px;width:72px;"></div>
<div class="inp cb" style="left:156px;top:352px;width:92px;letter-spacing:-0.9px">2.4GHz<div class="ddb"></div></div>
<div class="inp" style="left:66px;top:376px;width:183px;height:57px;padding:2px 0 0 2px;line-height:13px">675<br>725<br>815<br>2.4GHz</div>
<div class="vsep" style="left:262px;top:70px;height:487px"></div>
<div class="lbl b" style="left:276px;top:60px;">Entered Drivers:</div>
<div class="grid" style="left:276px;top:80px;width:305px;height:333px;background:#fff"><div class="in"></div><div class="cell hd" style="left:1px;top:1px;width:121px;">Name</div><div class="cell hd" style="left:122px;top:1px;width:121px;">Class</div><div class="cell hd" style="left:243px;top:1px;width:41px;">Archive</div><div class="cell" style="left:1px;top:18px;width:121px;">Lee Woodward</div><div class="cell" style="left:122px;top:18px;width:121px;letter-spacing:-0.6px;">2WD Buggy</div><div class="cell" style="left:243px;top:18px;width:41px;">139</div><div class="cell" style="left:1px;top:35px;width:121px;">Will Wyatt</div><div class="cell" style="left:122px;top:35px;width:121px;letter-spacing:-0.6px;">2WD Buggy</div><div class="cell" style="left:243px;top:35px;width:41px;">140</div><div class="cell" style="left:1px;top:52px;width:121px;">Ethan Sutton</div><div class="cell" style="left:122px;top:52px;width:121px;letter-spacing:-0.6px;">2WD Buggy</div><div class="cell" style="left:243px;top:52px;width:41px;">110</div><div class="cell" style="left:1px;top:69px;width:121px;">James Sutton</div><div class="cell" style="left:122px;top:69px;width:121px;letter-spacing:-0.6px;">4WD Buggy</div><div class="cell" style="left:243px;top:69px;width:41px;">98</div><div class="cell sel" style="left:1px;top:86px;width:121px;letter-spacing:-0.85px;">Thomas Lord</div><div class="cell sel" style="left:122px;top:86px;width:121px;letter-spacing:-0.6px;">2WD Buggy</div><div class="cell sel" style="left:243px;top:86px;width:41px;">215</div><div class="cell" style="left:1px;top:103px;width:121px;">Stuart Styles</div><div class="cell" style="left:122px;top:103px;width:121px;letter-spacing:-0.6px;">4WD Buggy</div><div class="cell" style="left:243px;top:103px;width:41px;">112</div><div class="cell" style="left:1px;top:120px;width:121px;">Dave Williams</div><div class="cell" style="left:122px;top:120px;width:121px;letter-spacing:-0.6px;">2WD Buggy</div><div class="cell" style="left:243px;top:120px;width:41px;">135</div><div class="cell" style="left:1px;top:137px;width:121px;">Dave Williams</div><div class="cell" style="left:122px;top:137px;width:121px;letter-spacing:-0.6px;">4WD Buggy</div><div class="cell" style="left:243px;top:137px;width:41px;">136</div><div class="cell" style="left:1px;top:154px;width:121px;">Leigh Richardson</div><div class="cell" style="left:122px;top:154px;width:121px;letter-spacing:-0.6px;">4WD Buggy</div><div class="cell" style="left:243px;top:154px;width:41px;">138</div><div class="cell" style="left:1px;top:171px;width:121px;letter-spacing:-0.72px;">Jason Ametrine</div><div class="cell" style="left:122px;top:171px;width:121px;letter-spacing:-0.6px;">2WD Buggy</div><div class="cell" style="left:243px;top:171px;width:41px;">132</div><div class="cell" style="left:1px;top:188px;width:121px;letter-spacing:-0.72px;">Jason Ametrine</div><div class="cell" style="left:122px;top:188px;width:121px;letter-spacing:-0.6px;">4WD Buggy</div><div class="cell" style="left:243px;top:188px;width:41px;">134</div><div class="cell" style="left:1px;top:205px;width:121px;">Andy Webb</div><div class="cell" style="left:122px;top:205px;width:121px;letter-spacing:-0.6px;">2WD Buggy</div><div class="cell" style="left:243px;top:205px;width:41px;">733</div><div class="cell" style="left:1px;top:222px;width:121px;letter-spacing:-0.7px;">Alan Marson</div><div class="cell" style="left:122px;top:222px;width:121px;letter-spacing:-0.6px;">4WD Buggy</div><div class="cell" style="left:243px;top:222px;width:41px;">629</div><div class="cell" style="left:1px;top:239px;width:121px;">Keith Marson</div><div class="cell" style="left:122px;top:239px;width:121px;letter-spacing:-0.6px;">2WD Buggy</div><div class="cell" style="left:243px;top:239px;width:41px;">10</div><div class="cell" style="left:1px;top:256px;width:121px;">Steve Haskins</div><div class="cell" style="left:122px;top:256px;width:121px;letter-spacing:-0.6px;">2WD Buggy</div><div class="cell" style="left:243px;top:256px;width:41px;">56</div><div class="cell" style="left:1px;top:273px;width:121px;">Zach Miles</div><div class="cell" style="left:122px;top:273px;width:121px;letter-spacing:-0.6px;">2WD Buggy</div><div class="cell" style="left:243px;top:273px;width:41px;">99</div><div class="cell" style="left:1px;top:290px;width:121px;letter-spacing:-0.7px;">James White</div><div class="cell" style="left:122px;top:290px;width:121px;letter-spacing:-0.6px;">4WD Buggy</div><div class="cell" style="left:243px;top:290px;width:41px;">133</div><div class="cell" style="left:1px;top:307px;width:121px;"></div><div class="cell" style="left:122px;top:307px;width:121px;"></div><div class="cell" style="left:243px;top:307px;width:41px;"></div><div class="a" style="left:286px;top:1px;width:17px;height:329px;background:#f0f0f0"></div><div class="a" style="left:286px;top:296px;width:15px;height:17px;background:#cdcdcd"></div><div class="a" style="left:290px;top:7px;line-height:0"><svg width="7" height="6" viewBox="0 0 7 6" shape-rendering="crispEdges"><path fill="#606060" d="M3 0h1v1h-1zM2 1h3v1h-3zM1 2h5v1h-5zM0 3h3v1h-3zM4 3h3v1h-3zM0 4h2v1h-2zM5 4h2v1h-2z"/><path fill="#a8a8a8" d="M0 5h1v1h-1zM6 5h1v1h-1z"/></svg></div><div class="a" style="left:290px;top:319px;line-height:0"><svg width="7" height="6" viewBox="0 0 7 6" shape-rendering="crispEdges"><path fill="#a8a8a8" d="M0 0h1v1h-1zM6 0h1v1h-1z"/><path fill="#606060" d="M0 1h2v1h-2zM5 1h2v1h-2zM0 2h3v1h-3zM4 2h3v1h-3zM1 3h5v1h-5zM2 4h3v1h-3zM3 5h1v1h-1z"/></svg></div></div>
<div class="hsep" style="left:282px;top:430px;width:291px"></div>
<div class="lbl b" style="left:276px;top:443px;">Drivers Results:</div>
<div class="lbl b" style="left:465px;top:444px;">Entries:</div>
<div class="vsep" style="left:451px;top:448px;height:109px"></div>
<div class="grid" style="left:276px;top:463px;width:163px;height:105px;background:#fff"><div class="in"></div><div class="cell hd" style="left:1px;top:1px;width:56px;">Race</div><div class="cell hd" style="left:57px;top:1px;width:31px;">Laps</div><div class="cell hd" style="left:88px;top:1px;width:55px;border-right-color:#a0a0a0;">Time</div><div class="cell hd" style="left:1px;top:18px;width:56px;">Round 3</div><div class="cell" style="left:57px;top:18px;width:31px;">12</div><div class="cell" style="left:88px;top:18px;width:55px;">307.33</div><div class="cell hd" style="left:1px;top:35px;width:56px;">Round 4</div><div class="cell" style="left:57px;top:35px;width:31px;">12</div><div class="cell" style="left:88px;top:35px;width:55px;">309.12</div><div class="cell hd" style="left:1px;top:52px;width:56px;">Final 1</div><div class="cell" style="left:57px;top:52px;width:31px;">12</div><div class="cell" style="left:88px;top:52px;width:55px;">318.85</div><div class="cell hd" style="left:1px;top:69px;width:56px;">Final 2</div><div class="cell" style="left:57px;top:69px;width:31px;">12</div><div class="cell" style="left:88px;top:69px;width:55px;">320.66</div><div class="cell hd" style="left:1px;top:86px;width:56px;">Final 3</div><div class="cell" style="left:57px;top:86px;width:31px;">12</div><div class="cell" style="left:88px;top:86px;width:55px;">313.48</div><div class="a" style="left:144px;top:1px;width:16px;height:102px;background:#f0f0f0"></div><div class="a" style="left:144px;top:69px;width:14px;height:17px;background:#cdcdcd"></div><div class="a" style="left:148px;top:7px;line-height:0"><svg width="7" height="6" viewBox="0 0 7 6" shape-rendering="crispEdges"><path fill="#606060" d="M3 0h1v1h-1zM2 1h3v1h-3zM1 2h5v1h-5zM0 3h3v1h-3zM4 3h3v1h-3zM0 4h2v1h-2zM5 4h2v1h-2z"/><path fill="#a8a8a8" d="M0 5h1v1h-1zM6 5h1v1h-1z"/></svg></div><div class="a" style="left:148px;top:92px;line-height:0"><svg width="7" height="6" viewBox="0 0 7 6" shape-rendering="crispEdges"><path fill="#a8a8a8" d="M0 0h1v1h-1zM6 0h1v1h-1z"/><path fill="#606060" d="M0 1h2v1h-2zM5 1h2v1h-2zM0 2h3v1h-3zM4 2h3v1h-3zM1 3h5v1h-5zM2 4h3v1h-3zM3 5h1v1h-1z"/></svg></div></div>
<div class="grid" style="left:465px;top:464px;width:168px;height:105px;background:#e6fff2"><div class="in"></div><div class="cell hd" style="left:1px;top:1px;width:121px;">Class</div><div class="cell hd" style="left:122px;top:1px;width:26px;">Tot</div><div class="cell" style="left:1px;top:18px;width:121px;background:#e6fff2;letter-spacing:-0.6px;">2WD Buggy</div><div class="cell" style="left:122px;top:18px;width:26px;background:#e6fff2;">21</div><div class="cell" style="left:1px;top:35px;width:121px;background:#e6fff2;letter-spacing:-0.6px;">4WD Buggy</div><div class="cell" style="left:122px;top:35px;width:26px;background:#e6fff2;">7</div><div class="cell" style="left:1px;top:52px;width:121px;background:#e6fff2;">QuickSilver Buggy</div><div class="cell" style="left:122px;top:52px;width:26px;background:#e6fff2;">0</div><div class="cell" style="left:1px;top:69px;width:121px;background:#e6fff2;">2WD Shortcourse</div><div class="cell" style="left:122px;top:69px;width:26px;background:#e6fff2;">1</div><div class="cell" style="left:1px;top:86px;width:121px;background:#e6fff2;">4WD Shortcourse</div><div class="cell" style="left:122px;top:86px;width:26px;background:#e6fff2;">0</div></div>
<div class="sp" style="left:6px;top:577px;width:38px;padding-left:1px;letter-spacing:-0.3px">v4.3</div>
<div class="sp" style="left:46px;top:577px;width:188px;"></div>
<div class="sp" style="left:236px;top:577px;width:278px;"></div>
<div class="sp" style="left:516px;top:577px;width:278px;letter-spacing:-0.12px">Trial Version (0 left)</div>
<svg class="a" style="left:780px;top:580px" width="14" height="14" viewBox="0 0 14 14"><g stroke="#a0a0a0" stroke-width="1.3"><line x1="2" y1="13" x2="13" y2="2"/><line x1="6" y1="13" x2="13" y2="6"/><line x1="10" y1="13" x2="13" y2="10"/></g><g stroke="#fff" stroke-width="1"><line x1="3" y1="13.500" x2="13.500" y2="3"/><line x1="7" y1="13.500" x2="13.500" y2="7"/><line x1="11" y1="13.500" x2="13.500" y2="11"/></g></svg>
</div>
</body>
</html>
